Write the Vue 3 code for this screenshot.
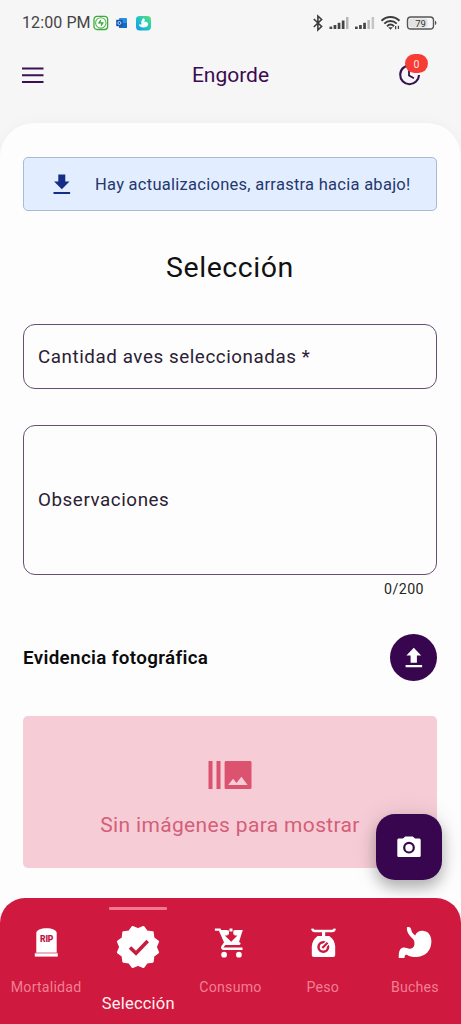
<script setup>
const tabs = [
  { id: 'mortalidad', label: 'Mortalidad' },
  { id: 'seleccion', label: 'Selección', active: true },
  { id: 'consumo', label: 'Consumo' },
  { id: 'peso', label: 'Peso' },
  { id: 'buches', label: 'Buches' },
]
</script>

<template>
  <div class="screen">
    <div class="status">
      <span class="time">12:00 PM</span>
      <svg class="apps" width="60" height="16" viewBox="0 0 60 16">
        <defs>
          <linearGradient id="aqua" x1="1" y1="0" x2="0" y2="1">
            <stop offset="0" stop-color="#5fe36b" />
            <stop offset=".5" stop-color="#1fc5c4" />
            <stop offset="1" stop-color="#1397e8" />
          </linearGradient>
        </defs>
        <rect x="1" y="1.3" width="13.6" height="13.2" rx="3" fill="#fff" stroke="#3faa3c" stroke-width="1.3" />
        <circle cx="7.8" cy="7.9" r="5.2" fill="none" stroke="#55b552" stroke-width="1.1" />
        <path d="M7.500 4.800v3.500H5.300zM8.200 11V7.600h2.300z" fill="#2f9e2d" stroke="#2f9e2d" stroke-width=".5" />
        <rect x="26" y="3" width="8" height="10" rx=".8" fill="#2a8fe0" />
        <path d="M26 8h8v4.200a.8.8 0 0 1-.8.8H26z" fill="#1769c2" />
        <rect x="23.2" y="4.8" width="6.4" height="6.4" rx=".7" fill="#1557ad" />
        <circle cx="26.4" cy="8" r="1.5" fill="none" stroke="#cfe2f8" stroke-width=".9" />
        <rect x="43" y="1" width="15" height="14.4" rx="3.6" fill="url(#aqua)" />
        <path d="M50.700 3c1.700 1.200 1.200 3 .6 4 2-.9 3.700.2 3.900 2-.2 2.700-2.600 3.700-4.800 3.500-2.500 0-4.200-1.200-4.600-3.300 1.100.6 2.100.5 2.800-.2C47.600 7.200 48.700 4.600 50.700 3z" fill="#f2fffb" />
      </svg>
      <svg class="signals" width="126" height="18" viewBox="0 0 126 18">
        <path d="M1.800 5l7.800 7.500L5.900 16V2l3.700 3.500L1.800 13" fill="none" stroke="#3b3b3b" stroke-width="1.600" />
        <g fill="#444">
          <rect x="17.500" y="12.600" width="2.700" height="2.400" /><rect x="21.600" y="11" width="2.700" height="4" />
          <rect x="25.700" y="8.800" width="2.700" height="6.200" /><rect x="29.800" y="6.500" width="2.700" height="8.500" />
          <rect x="34" y="3" width="2.500" height="12" fill="#b5b5b5" />
          <rect x="43" y="12.600" width="2.700" height="2.400" /><rect x="47.100" y="11" width="2.700" height="4" />
          <rect x="51.200" y="8.800" width="2.700" height="6.200" />
          <rect x="55.400" y="6" width="2.500" height="9" fill="#b5b5b5" />
          <rect x="59.600" y="3" width="2.500" height="12" fill="#c5c5c5" />
        </g>
        <g fill="none" stroke="#3b3b3b" stroke-width="1.900">
          <path d="M69.500 6.700c5.300-5 12.700-5 18 0" />
          <path d="M72.300 9.600c3.600-3.500 8.800-3.500 12.400 0" />
          <path d="M75 12.200c2.100-2 4.900-2 7 0" />
        </g>
        <path d="M76.200 13.200h4.600L78.500 15.700z" fill="#3b3b3b" />
        <path d="M83.600 12v3.200M86.400 11.700v3.200" stroke="#444" stroke-width="1.300" />
        <rect x="95.500" y="3" width="26" height="12" rx="3.300" fill="#f6f6f6" stroke="#555" stroke-width="1.400" />
        <rect x="97" y="4.500" width="18.500" height="9" rx="2" fill="#e2e2e2" />
        <path d="M123 6.800c1.800.3 1.800 4 0 4.300z" fill="#555" />
        <text x="108.500" y="12.500" text-anchor="middle" font-size="9.500" fill="#333">79</text>
      </svg>
    </div>

    <header class="bar">
      <svg width="22" height="16" viewBox="0 0 22 16"><path d="M0 1.600h21.500M0 8.300h21.500M0 15h21.500" stroke="#3c1152" stroke-width="2" /></svg>
      <h1>Engorde</h1>
      <div class="pending">
        <svg width="26" height="26" viewBox="0 0 26 26" fill="none" stroke="#38124e" stroke-width="2.100">
          <path d="M14 3.400a9.400 9.400 0 1 0 9 9.600" />
          <path d="M13 7.500v5.900l4.900 2.900" stroke-width="1.800" />
        </svg>
        <span class="badge">0</span>
      </div>
    </header>

    <main class="sheet">
      <div class="notice">
        <svg width="18" height="21" viewBox="0 0 18 21" fill="#142d86"><path d="M5.300.5h7v7h4.200L8.800 15.200 1.100 7.500h4.200zM.5 17.900h16.600v2.200H.5z" /></svg>
        <span>Hay actualizaciones, arrastra hacia abajo!</span>
      </div>
      <h2>Selección</h2>
      <div class="field"><span>Cantidad aves seleccionadas *</span></div>
      <div class="field area"><span>Observaciones</span></div>
      <div class="counter">0/200</div>
      <div class="evidence">
        <h3>Evidencia fotográfica</h3>
        <button class="upload" aria-label="Subir">
          <svg width="18" height="21" viewBox="0 0 18 21" fill="#fff"><path d="M5.600 15.700h6.300V8.500h4.300L8.800.7 1.400 8.500h4.200zM.6 18h16.500v2.200H.6z" /></svg>
        </button>
      </div>
      <div class="empty">
        <svg width="44" height="28" viewBox="0 0 44 28">
          <path d="M.5 0h4v28h-4zM8.500 0h4v28h-4z" fill="#dc5370" />
          <path d="M18.200 0h23.700c1 0 1.600.6 1.600 1.600v24.800c0 1-.6 1.600-1.600 1.600H18.200c-1 0-1.600-.6-1.600-1.600V1.600c0-1 .6-1.600 1.600-1.600zM20.200 24h19.400l-6.200-8.300-4.900 6.200-3.400-4.100z" fill="#dc5370" fill-rule="evenodd" />
        </svg>
        <span>Sin imágenes para mostrar</span>
      </div>
    </main>

    <button class="fab" aria-label="Cámara">
      <svg width="24" height="22" viewBox="0 0 24 22"><path d="M8.200.5h7.600L18 2.400h4c1 0 1.700.7 1.700 1.700v15.300c0 1-.7 1.700-1.700 1.700H2c-1 0-1.700-.7-1.700-1.700V4.100c0-1 .7-1.700 1.700-1.700h4z" fill="#fff" /><circle cx="12" cy="11.700" r="4.800" fill="#fff" stroke="#37064e" stroke-width="2.200" /></svg>
    </button>

    <nav class="tabs">
      <div v-for="tab in tabs" :key="tab.id" class="tab" :class="{ active: tab.active }">
        <svg v-if="tab.id === 'mortalidad'" width="36" height="36" viewBox="0 0 36 36">
          <path d="M8.300 28.500V8c0-2.800 4.800-4.700 10.200-4.700S28.700 5.200 28.700 8v20.500z" fill="#fff" />
          <path d="M6.800 28h23v3.600h-23z" fill="#fff" /><path d="M6.800 28h23" stroke="#dc5370" stroke-width=".9" />
          <text x="18.700" y="16.500" text-anchor="middle" font-size="8.600" font-weight="900" fill="#bd1740" textLength="13.500">RIP</text>
        </svg>
        <svg v-else-if="tab.id === 'seleccion'" width="44" height="44" viewBox="0 0 44 44">
          <path d="M22 4.200L27.400 1.900 30.900 6.600 36.700 7.300 37.400 13.100 42.100 16.600 39.800 22 42.100 27.400 37.400 30.900 36.700 36.700 30.900 37.400 27.400 42.100 22 39.800 16.600 42.100 13.100 37.400 7.300 36.700 6.600 30.900 1.900 27.400 4.200 22 1.900 16.600 6.600 13.100 7.300 7.300 13.100 6.600 16.600 1.900z" fill="#fff" stroke="#fff" stroke-width="2" stroke-linejoin="round" />
          <path d="M14 22.500l6 5.800L31.700 16.100" fill="none" stroke="#c91b40" stroke-width="3.600" />
        </svg>
        <svg v-else-if="tab.id === 'consumo'" width="36" height="36" viewBox="0 0 36 36">
          <path d="M2.900 4.600h4.800l5.800 13.200-2.900 3.700c-.8 1.200-.2 2.300 1.300 2.300h18.600" fill="none" stroke="#fff" stroke-width="2.400" />
          <path d="M13 18.500h14" stroke="#fff" stroke-width="3" stroke-linecap="round" />
          <path d="M8 5h22.800L26.500 18.500H13.500z" fill="#fff" />
          <path d="M15.500 3.500h7v7h3l-6.300 6.200-6.400-6.200h2.700z" fill="#cf193e" />
          <path d="M17.400 3.500h3v8.700h-3z" fill="#cf193e" />
          <path d="M17.500 3.400h3v3h-3zM14.500 5.500h2.500v4h-2.500zM21.300 5.500h2.500v4h-2.500z" fill="#fff" />
          <circle cx="12.100" cy="29.700" r="2.900" fill="#fff" /><circle cx="26.900" cy="29.700" r="2.900" fill="#fff" />
        </svg>
        <svg v-else-if="tab.id === 'peso'" width="36" height="36" viewBox="0 0 36 36">
          <path d="M7.300 3.600c.3 1.900 1.200 2.500 2.700 2.500h17c1.500 0 2.400-.6 2.700-2.500" fill="none" stroke="#fff" stroke-width="2.500" />
          <path d="M17 6.500h3.200v5H17z" fill="#fff" />
          <path d="M12.600 11h11.800c3.600 2.600 5.600 6.200 5.800 10.500V30c0 1.200-.8 2-2 2H8.800c-1.200 0-2-.8-2-2v-8.500c.2-4.300 2.200-7.900 5.800-10.500z" fill="#fff" />
          <circle cx="18.300" cy="22" r="4.800" fill="none" stroke="#c91b40" stroke-width="2.500" />
          <path d="M17.800 22.500l5.600-5.600" stroke="#fff" stroke-width="4.600" /><path d="M17.300 23l5.300-5.300" stroke="#c91b40" stroke-width="2.200" />
        </svg>
        <svg v-else width="36" height="36" viewBox="0 0 36 36">
          <path d="M9.800 2.500c1.600-.9 3.600-.5 4.100 1.100.5 3.100 1.800 5 4.200 6.800 1.300-3.300 4.200-4.900 7.900-4.600 5.400.6 8.500 4.800 8.400 10.800-.2 9-5.800 15-14.500 15.400-3.800.2-7-.3-9.700-2-1.700-.9-2.700.1-2.700 3.100H1.800c-.3-5.700.9-9.900 4.400-10.500 2.800-.3 4.400 1.500 7.300 1.100 3-.5 4.200-2.700 3.900-6-.1-2.300-.9-3.700-3-5.300C11.500 9.800 9.700 6.700 9.800 2.500z" fill="#fff" />
        </svg>
        <span class="label">{{ tab.label }}</span>
      </div>
    </nav>
  </div>
</template>

<style>
body { margin: 0; }
</style>

<style scoped>
* { box-sizing: border-box; }
.screen { position: relative; width: 461px; height: 1024px; overflow: hidden; background: #f6f6f6; font-family: Roboto, sans-serif; }
svg { display: block; flex: none; }
h1, h2, h3 { margin: 0; font-weight: 400; white-space: nowrap; }
button { border: 0; padding: 0; display: flex; align-items: center; justify-content: center; background: #37064e; }
.status { height: 46px; display: flex; align-items: center; padding: 0 23px 0 22px; }
.time { width: 70px; font-size: 16px; line-height: 48px; color: #444; letter-spacing: .1px; white-space: nowrap; }
.apps { margin-left: .5px; }
.signals { margin-left: auto; }
.bar { height: 77px; display: grid; grid-template-columns: 60px 1fr 60px; align-items: start; padding: 0 22px; color: #3a0b50; }
.bar > svg { margin-top: 21px; }
.bar h1 { text-align: center; font-size: 21px; line-height: 59px; }
.pending { position: relative; width: 26px; height: 26px; margin: 16px 0 0 17px; }
.badge { position: absolute; left: 9px; top: -8px; width: 23px; height: 19px; border-radius: 10px; background: #f73b35; color: #ffe5df; font-size: 10.500px; line-height: 21px; text-align: center; }
.sheet { height: 790px; padding: 34px 24px 0 23px; border-radius: 34px 34px 0 0; background: #fdfdfd; box-shadow: 0 0 14px rgba(0, 0, 0, .035); }
.notice { height: 54px; display: flex; align-items: center; padding-left: 29px; border: 1px solid #a9bad6; border-radius: 5px; background: #e2eeff; }
.notice span { margin-left: 24px; font-size: 16.500px; letter-spacing: .27px; color: #26376e; white-space: nowrap; }
h2 { height: 113px; line-height: 113px; text-align: center; font-size: 28.500px; letter-spacing: .55px; color: #111; }
.field { height: 65px; display: flex; align-items: center; padding-left: 14px; border: 1px solid #655071; border-radius: 12px; font-size: 18.800px; letter-spacing: .57px; color: #2b2034; white-space: nowrap; }
.area { height: 150px; margin-top: 36px; }
.counter { height: 28px; padding-right: 13px; text-align: right; font-size: 14.200px; line-height: 28px; letter-spacing: .45px; color: #252525; }
.evidence { height: 47px; margin-top: 31px; display: flex; align-items: center; justify-content: space-between; }
h3 { font-size: 18.800px; font-weight: 600; letter-spacing: .35px; color: #0b0b0b; }
.upload { width: 47px; height: 47px; border-radius: 50%; }
.empty { height: 152px; margin-top: 35px; display: flex; flex-direction: column; align-items: center; padding-top: 45px; border-radius: 5px; background: #f6cdd6; color: #d55e78; }
.empty span { margin-top: 23px; font-size: 21px; line-height: 26px; letter-spacing: .35px; white-space: nowrap; }
.fab { position: absolute; left: 376px; top: 814px; width: 66px; height: 66px; border-radius: 19px; box-shadow: 0 8px 14px rgba(0, 0, 0, .24), 0 2px 24px rgba(0, 0, 0, .13); }
.tabs { position: absolute; left: 0; right: 0; bottom: 0; height: 126px; display: grid; grid-template-columns: repeat(5, 1fr); border-radius: 25px 25px 0 0; background: #cf193e; }
.tab { display: flex; flex-direction: column; align-items: center; padding-top: 27px; color: #f37f94; }
.label { margin-top: 16px; font-size: 14.200px; line-height: 20px; letter-spacing: .2px; }
.active { position: relative; padding-top: 27px; color: #fff0f2; }
.active::before { content: ''; position: absolute; top: 9px; left: 17px; width: 58px; height: 3px; border-radius: 1px; background: #f17a91; }
.active .label { margin-top: 25px; font-size: 16.500px; }
</style>
